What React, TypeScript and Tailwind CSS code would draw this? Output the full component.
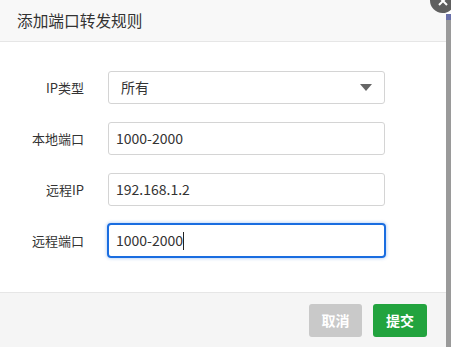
import React from "react";

const font = { fontFamily: '"Noto Sans CJK SC", "Noto Sans", sans-serif' };

function Row({ label, children }: { label: string; children: React.ReactNode }) {
  return (
    <div className="flex items-center h-[33px]">
      <div className="w-[84px] text-right text-[13px] text-[#333]">{label}</div>
      <div className="ml-[24px] w-[277px] h-full">{children}</div>
    </div>
  );
}

export default function App() {
  return (
    <div className="relative flex w-[451px] h-[347px] overflow-hidden bg-white" style={font}>
      <div className="flex flex-col w-[446px] h-full">
        <div className="h-[42px] shrink-0 bg-[#f8f8f8] border-b border-[#e6e6e6] flex items-center pl-[17px] text-[15.7px] text-[#333]">
          添加端口转发规则
        </div>
        <div className="flex-1 bg-white pt-[29px] flex flex-col gap-[18px]">
          <Row label="IP类型">
            <div className="h-full border border-[#d4d4d4] rounded-[3px] flex items-center justify-between pl-[12px] pr-[12px] text-[14px] text-[#333]">
              <span>所有</span>
              <svg width="12" height="7" viewBox="0 0 12 7"><path d="M0 0H12L6 7Z" fill="#666" /></svg>
            </div>
          </Row>
          <Row label="本地端口">
            <div className="h-full border border-[#d4d4d4] rounded-[3px] flex items-center pl-[7px] text-[14px] text-[#333]">1000-2000</div>
          </Row>
          <Row label="远程IP">
            <div className="h-full border border-[#d4d4d4] rounded-[3px] flex items-center pl-[7px] text-[14px] text-[#333]">192.168.1.2</div>
          </Row>
          <div className="flex items-center h-[35px] -mt-[1px]">
            <div className="w-[84px] text-right text-[13px] text-[#333]">远程端口</div>
            <div className="ml-[23px] w-[279px] h-full border-2 border-[#1a6de0] rounded-[4px] flex items-center pl-[7px] text-[14px] text-[#333] shadow-[0_0_3px_1px_rgba(26,109,224,0.25)]">
              <span>1000-2000</span>
              <span className="w-px h-[18px] bg-[#222]" />
            </div>
          </div>
        </div>
        <div className="h-[55px] shrink-0 bg-[#f5f5f5] border-t border-[#e6e6e6] flex items-start justify-end pt-[11px] pr-[19px] gap-[11px]">
          <div className="w-[53px] h-[33px] rounded-[3px] bg-[#c9c9c9] text-white text-[14px] font-bold flex items-center justify-center">取消</div>
          <div className="w-[54px] h-[33px] rounded-[3px] bg-[#22a33e] text-white text-[14px] font-bold flex items-center justify-center">提交</div>
        </div>
      </div>
      <div className="w-[5px] h-full flex flex-col">
        <div className="h-[14px] bg-white" />
        <div className="h-[6px] bg-[#6a70a8]" />
        <div className="flex-1 bg-[#9a9a9a]" />
      </div>
      <div className="absolute left-[430px] top-[-12px] w-[25px] h-[25px] rounded-full bg-[#5f5f5f] flex items-center justify-center">
        <svg width="10" height="10" viewBox="0 0 10 10"><path d="M1 1L9 9M9 1L1 9" stroke="#fff" strokeWidth="2" /></svg>
      </div>
    </div>
  );
}
